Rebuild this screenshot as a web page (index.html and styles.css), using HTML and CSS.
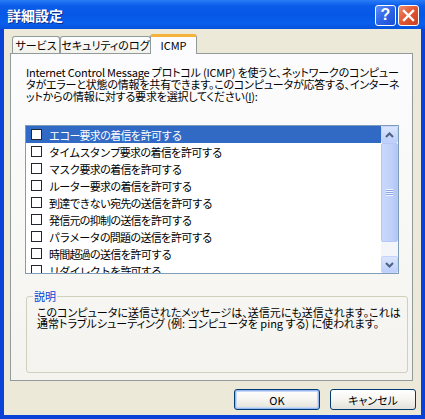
FILE: index.html
```html
<!DOCTYPE html>
<html lang="ja">
<head>
<meta charset="utf-8">
<title>詳細設定</title>
<link rel="stylesheet" href="styles.css">
</head>
<body>
<div class="window">
  <div class="titlebar">
    <span class="title">詳細設定</span>
    <div class="tbtns">
      <div class="tbtn help">?</div>
      <div class="tbtn close">
        <svg width="13" height="13" viewBox="0 0 13 13"><path d="M2 2 L11 11 M11 2 L2 11" stroke="#fff" stroke-width="2.4" stroke-linecap="square" fill="none"/></svg>
      </div>
    </div>
  </div>
  <div class="client">
    <div class="tabs">
      <div class="tab t1">サービス</div>
      <div class="tab t2">セキュリティのログ</div>
      <div class="tab t3 active">ICMP</div>
    </div>
    <div class="panel">
      <p class="intro">Internet Control Message プロトコル (ICMP) を使うと、ネットワークのコンピュー<br>タがエラーと状態の情報を共有できます。このコンピュータが応答する、インターネ<br>ットからの情報に対する要求を選択してください(<u>I</u>):</p>
      <div class="listbox">
        <ul class="rows">
          <li class="row selected"><span class="cb"></span><span class="lbl">エコー要求の着信を許可する</span></li>
          <li class="row"><span class="cb"></span><span class="lbl">タイムスタンプ要求の着信を許可する</span></li>
          <li class="row"><span class="cb"></span><span class="lbl">マスク要求の着信を許可する</span></li>
          <li class="row"><span class="cb"></span><span class="lbl">ルーター要求の着信を許可する</span></li>
          <li class="row"><span class="cb"></span><span class="lbl">到達できない宛先の送信を許可する</span></li>
          <li class="row"><span class="cb"></span><span class="lbl">発信元の抑制の送信を許可する</span></li>
          <li class="row"><span class="cb"></span><span class="lbl">パラメータの問題の送信を許可する</span></li>
          <li class="row"><span class="cb"></span><span class="lbl">時間超過の送信を許可する</span></li>
          <li class="row"><span class="cb"></span><span class="lbl">リダイレクトを許可する</span></li>
        </ul>
        <div class="vscroll">
          <div class="sbtn">
            <svg width="9" height="6" viewBox="0 0 9 6"><path d="M1 5 L4.5 1.5 L8 5" stroke="#4D6185" stroke-width="2" fill="none"/></svg>
          </div>
          <div class="thumb"><span class="grip"></span></div>
          <div class="track"></div>
          <div class="sbtn">
            <svg width="9" height="6" viewBox="0 0 9 6"><path d="M1 1 L4.5 4.5 L8 1" stroke="#4D6185" stroke-width="2" fill="none"/></svg>
          </div>
        </div>
      </div>
      <fieldset class="group">
        <legend>説明</legend>
        <p class="desc">このコンピュータに送信されたメッセージは、送信元にも送信されます。これは<br>通常トラブルシューティング (例: コンピュータを ping する) に使われます。</p>
      </fieldset>
    </div>
    <div class="buttons">
      <div class="btn default">OK</div>
      <div class="btn">キャンセル</div>
    </div>
  </div>
</div>
</body>
</html>
```
FILE: styles.css
```css
html, body {
  margin: 0;
  padding: 0;
  background: #0a46d8;
}
body {
  width: 425px;
  height: 419px;
  overflow: hidden;
  font-family: "Noto Sans CJK JP", "Liberation Sans", sans-serif;
  font-size: 11px;
  color: #000;
}
.window {
  width: 425px;
  height: 419px;
  display: flex;
  flex-direction: column;
  background: #0842d6;
}
.titlebar {
  height: 29px;
  flex: none;
  display: flex;
  align-items: center;
  justify-content: space-between;
  padding: 0 6px 0 7px;
  background: linear-gradient(to bottom, #2a7cf6 0, #1a6cf0 3px, #0a5ce8 6px, #0657e6 50%, #0a5fed 80%, #0552dc 100%);
}
.title {
  color: #fff;
  font-weight: bold;
  font-size: 14px;
  text-shadow: 1px 1px 0 #0a2f8a;
  line-height: 16px;
}
.tbtns {
  display: flex;
  gap: 2px;
  margin-top: 1px;
}
.tbtn {
  width: 19px;
  height: 19px;
  border: 1px solid #fff;
  border-radius: 3px;
  display: flex;
  align-items: center;
  justify-content: center;
  color: #fff;
  font-family: "Liberation Sans", sans-serif;
  font-weight: bold;
  font-size: 16px;
}
.help {
  background: linear-gradient(135deg, #5e8ff5 0, #2d64e6 50%, #1c4fd4 100%);
}
.close {
  background: linear-gradient(135deg, #f08e70 0, #e2552f 50%, #c9401f 100%);
}
.client {
  flex: 1;
  margin: 0 4px 4px 4px;
  background: #ece9d8;
  display: flex;
  flex-direction: column;
  padding-top: 5px;
}
.tabs {
  height: 20px;
  margin: 0 0 -1px 8px;
  display: flex;
  align-items: flex-end;
  position: relative;
  z-index: 1;
}
.tab {
  box-sizing: border-box;
  height: 17px;
  margin-bottom: 1px;
  border: 1px solid #919b9c;
  border-bottom: none;
  border-radius: 3px 3px 0 0;
  background: linear-gradient(to bottom, #fefefe, #f2f1ea);
  text-align: center;
  line-height: 16px;
  white-space: nowrap;
  font-feature-settings: "palt" 1;
}
.t1 { width: 48px; }
.t2 { width: 91px; margin-left: 0; }
.t3 { width: 47px; margin-left: -1px; }
.tab.active {
  height: 20px;
  margin-bottom: 0;
  background: #fcfcfe;
  border-top: 3px solid #f6b33c;
  line-height: 16px;
}
.panel {
  box-sizing: border-box;
  width: 403px;
  height: 328px;
  margin-left: 6px;
  border: 1px solid #919b9c;
  background: linear-gradient(to bottom, #fcfcfe 0, #f8f8f6 50%, #f4f3ee 100%);
  padding: 12px 14px 0 15px;
}
.intro {
  margin: 0;
  line-height: 12px;
  white-space: nowrap;
  letter-spacing: -0.2px;
  font-feature-settings: "palt" 1;
}
.listbox {
  margin: 23px -1px 0 -1px;
  height: 149px;
  box-sizing: border-box;
  border: 1px solid #7f9db9;
  background: #fff;
  display: flex;
}
.rows {
  list-style: none;
  margin: 0;
  padding: 0;
  flex: 1;
  overflow: hidden;
}
.row {
  height: 17px;
  display: flex;
  align-items: center;
  white-space: nowrap;
  letter-spacing: -0.8px;
}
.row.selected {
  background: #316ac5;
  color: #fff;
}
.cb {
  box-sizing: border-box;
  width: 11px;
  height: 11px;
  border: 1px solid #22272e;
  background: #fff;
  margin: 0 7px 0 5px;
  flex: none;
}
.vscroll {
  width: 17px;
  flex: none;
  display: flex;
  flex-direction: column;
  background: #f5f6fa;
}
.sbtn {
  box-sizing: border-box;
  height: 17px;
  border: 1px solid #c3d3fd;
  border-radius: 2px;
  background: linear-gradient(to bottom, #dbe6fd, #bccffa);
  display: flex;
  align-items: center;
  justify-content: center;
}
.thumb {
  box-sizing: border-box;
  height: 99px;
  border: 1px solid #b4c7f6;
  border-radius: 2px;
  background: linear-gradient(to right, #c9d8fc, #bfd1fb 60%, #b3c6f5);
  display: flex;
  align-items: center;
  justify-content: center;
}
.grip {
  width: 7px;
  height: 7px;
  background: repeating-linear-gradient(to bottom, #eef3fe 0, #eef3fe 1px, #8ca5e4 1px, #8ca5e4 2px);
}
.track {
  flex: 1;
  background: #f4f5f9;
}
.group {
  margin: 16px -1px 0 0;
  height: 83px;
  box-sizing: border-box;
  border: 1px solid #d0d0bf;
  border-radius: 3px;
  padding: 0 6px 0 10px;
}
.group legend {
  color: #0046d5;
  padding: 0 1px;
  margin-left: -4px;
  line-height: 12px;
  font-feature-settings: "palt" 1;
}
.desc {
  margin: 5px 0 0 0;
  line-height: 11px;
  white-space: nowrap;
  font-feature-settings: "palt" 1;
}
.buttons {
  display: flex;
  justify-content: flex-end;
  gap: 10px;
  margin: 8px 5px 0 0;
}
.btn {
  box-sizing: border-box;
  width: 86px;
  height: 21px;
  border: 1px solid #003c74;
  border-radius: 3px;
  background: linear-gradient(to bottom, #ffffff 0, #f5f4f0 50%, #e3e1d8 100%);
  display: flex;
  align-items: center;
  justify-content: center;
  font-feature-settings: "palt" 1;
}
.btn.default {
  box-shadow: inset 0 0 0 1px #98b8f0, inset 0 0 0 2px #c8d8f8;
}
```
